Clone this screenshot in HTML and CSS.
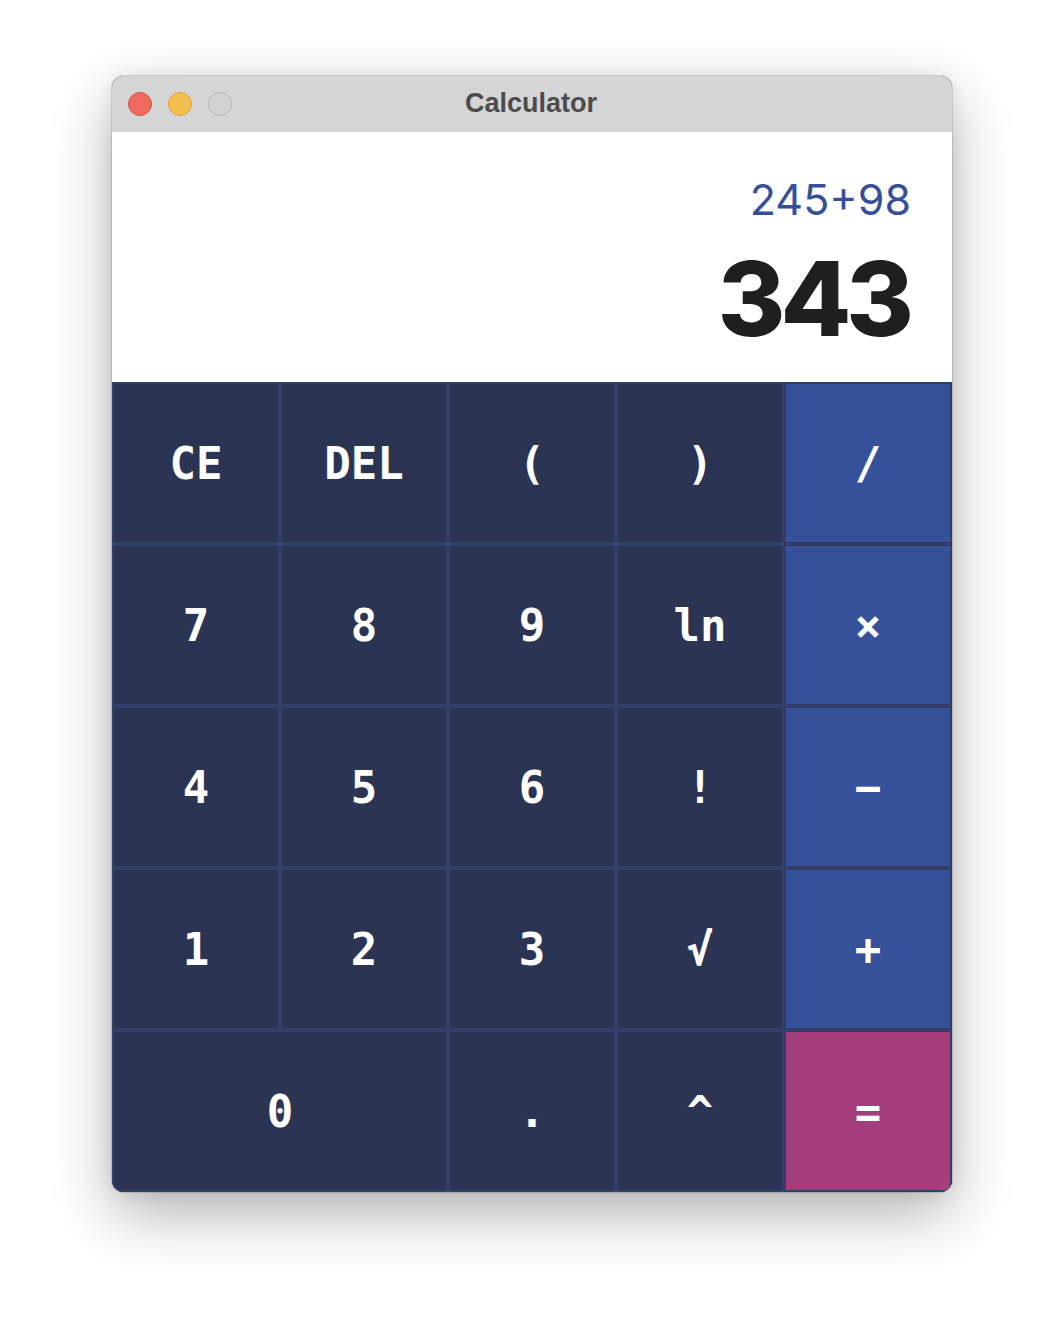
FILE: index.html
```html
<!DOCTYPE html>
<html lang="en">
<head>
<meta charset="utf-8">
<title>Calculator</title>
<link rel="stylesheet" href="styles.css">
</head>
<body>
<div class="window">
  <div class="titlebar">
    <div class="lights">
      <span class="light red"></span>
      <span class="light yellow"></span>
      <span class="light grey"></span>
    </div>
    <div class="title">Calculator</div>
  </div>
  <div class="display">
    <div class="expr">245+98</div>
    <div class="result">343</div>
  </div>
  <div class="keypad">
    <button class="key">CE</button>
    <button class="key">DEL</button>
    <button class="key">(</button>
    <button class="key">)</button>
    <button class="key op">/</button>
    <button class="key">7</button>
    <button class="key">8</button>
    <button class="key">9</button>
    <button class="key">ln</button>
    <button class="key op">×</button>
    <button class="key">4</button>
    <button class="key">5</button>
    <button class="key">6</button>
    <button class="key">!</button>
    <button class="key op">−</button>
    <button class="key">1</button>
    <button class="key">2</button>
    <button class="key">3</button>
    <button class="key">√</button>
    <button class="key op">+</button>
    <button class="key wide">0</button>
    <button class="key">.</button>
    <button class="key">^</button>
    <button class="key eq">=</button>
  </div>
</div>
</body>
</html>
```
FILE: styles.css
```css
html, body {
  margin: 0;
  padding: 0;
  background: #ffffff;
}
body {
  width: 1064px;
  height: 1340px;
  overflow: hidden;
}
.window {
  width: 840px;
  margin: 76px 0 0 112px;
  border-radius: 12px;
  overflow: hidden;
  box-shadow: 0 0 0 1px rgba(0,0,0,0.12), 0 22px 60px rgba(0,0,0,0.30), 0 0 18px rgba(0,0,0,0.08);
  background: #2b3453;
}
.titlebar {
  height: 56px;
  background: #d5d5d5;
  display: flex;
  align-items: center;
  position: relative;
}
.lights {
  display: flex;
  gap: 16px;
  padding-left: 16px;
}
.light {
  width: 24px;
  height: 24px;
  border-radius: 50%;
  display: block;
  box-sizing: border-box;
}
.red { background: #ee6a5f; border: 1px solid #d55248; }
.yellow { background: #f5bf4f; border: 1px solid #d9a33a; }
.grey { background: #d2d2d2; border: 1px solid #b8b8b8; }
.title {
  position: absolute;
  left: 0;
  right: 0;
  top: -1px;
  line-height: 56px;
  text-align: center;
  font-family: "Liberation Sans", Arial, sans-serif;
  font-weight: 700;
  font-size: 27px;
  color: #4b4b4b;
  padding-right: 2px;
}
.display {
  height: 250px;
  background: #ffffff;
  box-sizing: border-box;
  padding: 45px 41px 0 0;
  display: flex;
  flex-direction: column;
  align-items: flex-end;
  font-family: Inter, "Noto Sans", sans-serif;
}
.expr {
  font-size: 43px;
  line-height: 45px;
  font-weight: 400;
  color: #374f9a;
}
.result {
  margin-top: 24px;
  margin-right: 2px;
  font-size: 103px;
  line-height: 105px;
  font-weight: 800;
  color: #1f1f1f;
  letter-spacing: -5px;
}
.keypad {
  display: grid;
  grid-template-columns: repeat(5, 1fr);
  grid-auto-rows: 162px;
  background: #33406a;
}
.key {
  margin: 0;
  border: 2px solid #33406a;
  background: #2b3453;
  color: #ffffff;
  font-family: "DejaVu Sans Mono", "Liberation Mono", monospace;
  font-weight: 700;
  font-size: 44px;
  padding: 0;
  display: flex;
  align-items: center;
  justify-content: center;
  box-sizing: border-box;
}
.key.op {
  background: #37509a;
  border-color: #313d66;
}
.key.eq {
  background: #a33d7c;
  border-color: #313d66;
}
.key.wide {
  grid-column: span 2;
}
```
